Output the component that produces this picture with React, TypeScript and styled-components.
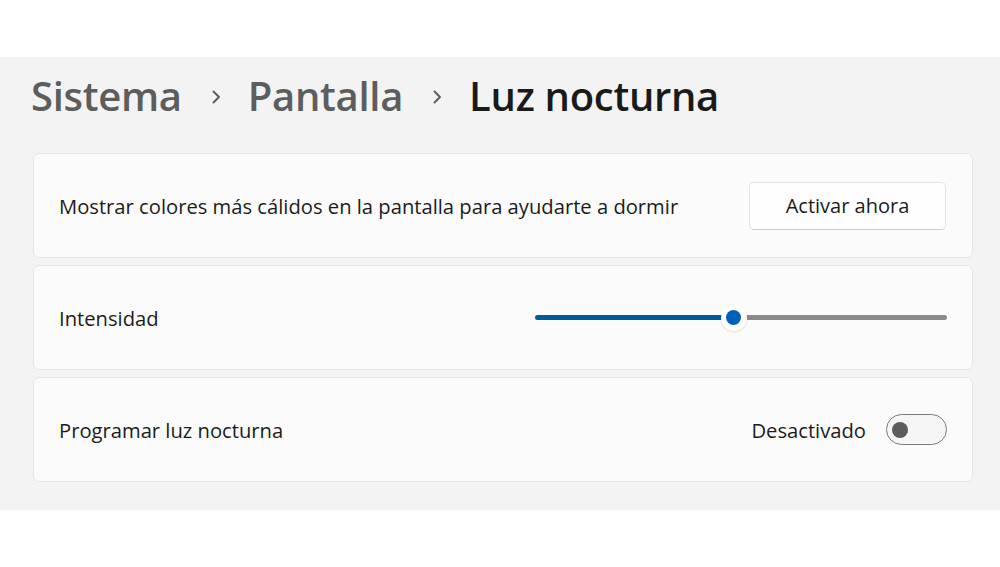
import React from "react";
import styled, { createGlobalStyle } from "styled-components";

const Global = createGlobalStyle`
  html, body { margin: 0; padding: 0; background: #ffffff; }
  body { font-family: "Open Sans", "Noto Sans", sans-serif; }
`;

const Page = styled.div`
  width: 1000px;
  height: 567px;
  display: flex;
  flex-direction: column;
  background: #ffffff;
`;

const TopBand = styled.div`
  height: 57px;
  background: #ffffff;
`;

const Panel = styled.main`
  height: 453px;
  background: #f3f3f3;
  padding: 0 27px 0 33px;
  box-sizing: border-box;
  display: flex;
  flex-direction: column;
`;

const Breadcrumb = styled.h1`
  margin: 0 0 0 -2px;
  height: 96px;
  box-sizing: border-box;
  padding-bottom: 18px;
  display: flex;
  align-items: center;
  font-size: 40px;
  font-weight: 600;
  letter-spacing: -0.3px;
  line-height: 1;
`;

const Crumb = styled.span<{ $current?: boolean }>`
  color: ${(p) => (p.$current ? "#1a1a1a" : "#5d5d5d")};
  font-weight: 600;
`;

const Chevron = styled.svg`
  width: 14px;
  height: 14px;
  margin: 2px 25px 0 27px;
  flex: none;
`;

const Cards = styled.div`
  display: flex;
  flex-direction: column;
  gap: 7px;
`;

const Card = styled.section`
  height: 105px;
  box-sizing: border-box;
  background: #fbfbfb;
  border: 1px solid #e6e6e6;
  border-radius: 6px;
  display: flex;
  align-items: center;
  justify-content: space-between;
  padding: 0 25px 0 25px;
`;

const Label = styled.span`
  font-size: 20.2px;
  color: #1b1b1b;
`;

const Button = styled.button`
  width: 197px;
  height: 48px;
  background: #fefefe;
  border: 1px solid #e3e3e3;
  border-bottom-color: #cfcfcf;
  border-radius: 5px;
  font-family: inherit;
  font-size: 20px;
  color: #1b1b1b;
  margin-right: 1px;
`;

const Slider = styled.div`
  width: 412px;
  height: 26px;
  display: flex;
  align-items: center;
`;

const TrackFill = styled.div`
  height: 5px;
  background: #005a9e;
  border-radius: 3px;
`;

const TrackRest = styled.div`
  flex: 1;
  height: 5px;
  background: #8a8a8a;
  border-radius: 3px;
`;

const Thumb = styled.div`
  width: 26px;
  height: 26px;
  border-radius: 50%;
  background: #ffffff;
  box-shadow: 0 1px 2px rgba(0, 0, 0, 0.12);
  display: flex;
  align-items: center;
  justify-content: center;
  flex: none;
  margin: 0 -3px;
  z-index: 1;
  &::after {
    content: "";
    width: 15px;
    height: 15px;
    border-radius: 50%;
    background: #005fb8;
  }
`;

const ToggleGroup = styled.div`
  display: flex;
  align-items: center;
  gap: 20px;
`;

const Toggle = styled.div`
  width: 61px;
  height: 31px;
  box-sizing: border-box;
  border: 1.5px solid #7a7a7a;
  border-radius: 16px;
  background: #f6f6f6;
  display: flex;
  align-items: center;
  padding-left: 5px;
  &::before {
    content: "";
    width: 16px;
    height: 16px;
    border-radius: 50%;
    background: #5d5d5d;
  }
`;

const ChevronIcon = () => (
  <Chevron viewBox="0 0 14 14">
    <path d="M4.5 1.5 L10 7 L4.5 12.5" fill="none" stroke="#5d5d5d" strokeWidth="1.9" strokeLinecap="round" strokeLinejoin="round" />
  </Chevron>
);

export default function App() {
  const value = 0.482;
  return (
    <>
      <Global />
      <Page>
        <TopBand />
        <Panel>
          <Breadcrumb>
            <Crumb>Sistema</Crumb>
            <ChevronIcon />
            <Crumb>Pantalla</Crumb>
            <ChevronIcon />
            <Crumb $current>Luz nocturna</Crumb>
          </Breadcrumb>
          <Cards>
            <Card>
              <Label>Mostrar colores más cálidos en la pantalla para ayudarte a dormir</Label>
              <Button>Activar ahora</Button>
            </Card>
            <Card>
              <Label>Intensidad</Label>
              <Slider>
                <TrackFill style={{ width: `calc(${value * 100}% - 10px)` }} />
                <Thumb />
                <TrackRest />
              </Slider>
            </Card>
            <Card>
              <Label>Programar luz nocturna</Label>
              <ToggleGroup>
                <Label>Desactivado</Label>
                <Toggle />
              </ToggleGroup>
            </Card>
          </Cards>
        </Panel>
      </Page>
    </>
  );
}
